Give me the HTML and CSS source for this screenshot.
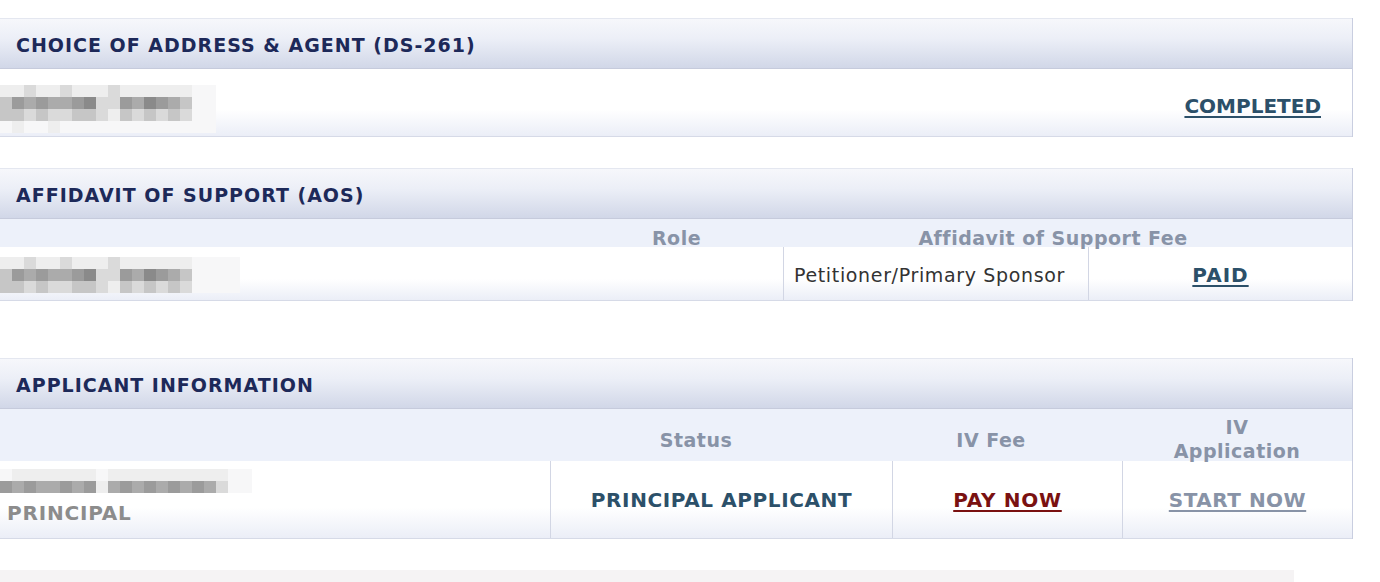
FILE: index.html
```html
<!DOCTYPE html>
<html>
<head>
<meta charset="utf-8">
<link rel="stylesheet" href="styles.css">
</head>
<body>
<div class="page">
  <section class="panel p1">
    <div class="panel-head">CHOICE OF ADDRESS &amp; AGENT (DS-261)</div>
    <div class="row row-single">
      <div class="blur blur1">
        <div class="bl r0"><i class="c1"></i><i class="c1"></i><i class="c2"></i><i class="c1"></i><i class="c1"></i><i class="c2"></i><i class="c1"></i><i class="c1"></i><i class="c1"></i><i class="c2"></i><i class="c1"></i><i class="c1"></i><i class="c1"></i><i class="c1"></i><i class="c1"></i><i class="c1"></i><i class="c0"></i><i class="c0"></i></div>
        <div class="bl r1"><i class="c3"></i><i class="c5"></i><i class="c4"></i><i class="c5"></i><i class="c4"></i><i class="c4"></i><i class="c5"></i><i class="c6"></i><i class="c2"></i><i class="c2"></i><i class="c5"></i><i class="c4"></i><i class="c6"></i><i class="c5"></i><i class="c4"></i><i class="c3"></i><i class="c0"></i><i class="c0"></i></div>
        <div class="bl r2"><i class="c3"></i><i class="c3"></i><i class="c2"></i><i class="c3"></i><i class="c2"></i><i class="c2"></i><i class="c3"></i><i class="c3"></i><i class="c2"></i><i class="c1"></i><i class="c3"></i><i class="c2"></i><i class="c3"></i><i class="c2"></i><i class="c3"></i><i class="c2"></i><i class="c0"></i><i class="c0"></i></div>
        <div class="bl r3"><i class="c0"></i><i class="c1"></i><i class="c0"></i><i class="c0"></i><i class="c1"></i><i class="c0"></i><i class="c0"></i><i class="c0"></i><i class="c0"></i><i class="c0"></i><i class="c0"></i><i class="c0"></i><i class="c0"></i><i class="c0"></i><i class="c0"></i><i class="c0"></i><i class="c0"></i><i class="c0"></i></div>
      </div>
      <a class="link status-link completed" href="#">COMPLETED</a>
    </div>
  </section>

  <section class="panel p2">
    <div class="panel-head">AFFIDAVIT OF SUPPORT (AOS)</div>
    <div class="subhead sub2">
      <div></div>
      <div class="sh">Role</div>
      <div class="sh">Affidavit of Support Fee</div>
      <div></div>
    </div>
    <div class="row grid2">
      <div class="cell name-cell">
        <div class="blur">
          <div class="bl r0"><i class="c1"></i><i class="c1"></i><i class="c2"></i><i class="c1"></i><i class="c1"></i><i class="c2"></i><i class="c1"></i><i class="c1"></i><i class="c1"></i><i class="c2"></i><i class="c1"></i><i class="c1"></i><i class="c1"></i><i class="c1"></i><i class="c1"></i><i class="c1"></i><i class="c0"></i><i class="c0"></i><i class="c0"></i><i class="c0"></i></div>
          <div class="bl r1"><i class="c3"></i><i class="c5"></i><i class="c4"></i><i class="c5"></i><i class="c4"></i><i class="c4"></i><i class="c5"></i><i class="c6"></i><i class="c2"></i><i class="c2"></i><i class="c5"></i><i class="c4"></i><i class="c6"></i><i class="c5"></i><i class="c4"></i><i class="c3"></i><i class="c0"></i><i class="c0"></i><i class="c0"></i><i class="c0"></i></div>
          <div class="bl r2"><i class="c3"></i><i class="c3"></i><i class="c2"></i><i class="c3"></i><i class="c2"></i><i class="c2"></i><i class="c3"></i><i class="c3"></i><i class="c2"></i><i class="c1"></i><i class="c3"></i><i class="c2"></i><i class="c3"></i><i class="c2"></i><i class="c3"></i><i class="c2"></i><i class="c0"></i><i class="c0"></i><i class="c0"></i><i class="c0"></i></div>
        </div>
      </div>
      <div class="cell role-cell">Petitioner/Primary Sponsor</div>
      <div class="cell center"><a class="link status-link paid" href="#">PAID</a></div>
    </div>
  </section>

  <section class="panel p3">
    <div class="panel-head">APPLICANT INFORMATION</div>
    <div class="subhead sub3">
      <div></div>
      <div class="sh">Status</div>
      <div class="sh fee">IV Fee</div>
      <div class="sh two">IV<br>Application</div>
    </div>
    <div class="row grid3">
      <div class="cell name-cell3">
        <div class="blur">
          <div class="bl r0"><i class="c0"></i><i class="c1"></i><i class="c1"></i><i class="c1"></i><i class="c1"></i><i class="c1"></i><i class="c1"></i><i class="c1"></i><i class="c0"></i><i class="c1"></i><i class="c1"></i><i class="c1"></i><i class="c1"></i><i class="c1"></i><i class="c1"></i><i class="c1"></i><i class="c1"></i><i class="c1"></i><i class="c1"></i><i class="c0"></i><i class="c0"></i></div>
          <div class="bl r1"><i class="c5"></i><i class="c4"></i><i class="c5"></i><i class="c4"></i><i class="c4"></i><i class="c5"></i><i class="c4"></i><i class="c5"></i><i class="c1"></i><i class="c4"></i><i class="c5"></i><i class="c4"></i><i class="c5"></i><i class="c4"></i><i class="c5"></i><i class="c4"></i><i class="c5"></i><i class="c4"></i><i class="c2"></i><i class="c0"></i><i class="c0"></i></div>
        </div>
        <div class="principal">PRINCIPAL</div>
      </div>
      <div class="cell center"><span class="status-text">PRINCIPAL APPLICANT</span></div>
      <div class="cell center"><a class="link pay" href="#">PAY NOW</a></div>
      <div class="cell center"><a class="link start" href="#">START NOW</a></div>
    </div>
  </section>

  <div class="footer-bar"></div>
</div>
</body>
</html>
```

FILE: styles.css
```css
html, body {
  margin: 0;
  padding: 0;
  background: #ffffff;
}

body {
  font-family: "DejaVu Sans", Verdana, sans-serif;
  overflow: hidden;
}

.page {
  width: 1380px;
  height: 582px;
  padding-top: 18px;
  box-sizing: border-box;
}

.panel {
  width: 1353px;
  box-sizing: border-box;
  border-right: 1px solid #c9cee0;
}

.p2 { margin-top: 31px; }
.p3 { margin-top: 57px; }

.panel-head {
  height: 51px;
  box-sizing: border-box;
  border-top: 1px solid #e4e7f0;
  border-bottom: 1px solid #c6cbdc;
  background: linear-gradient(#f6f7fb, #eceff7 40%, #d1d7e8);
  display: flex;
  align-items: center;
  padding-left: 16px;
  padding-top: 2px;
  font-weight: bold;
  font-size: 19px;
  color: #1d2959;
  letter-spacing: 1px;
}

.row {
  box-sizing: border-box;
  border-bottom: 1px solid #d6dae7;
  background: linear-gradient(#ffffff 60%, #ebeef7);
}

.row-single {
  height: 68px;
  display: flex;
  align-items: center;
  justify-content: space-between;
  padding-right: 31px;
  padding-top: 6px;
}

.blur1 { margin-top: 6px; }

.link {
  font-weight: bold;
  font-size: 20px;
  letter-spacing: 0.5px;
  text-decoration: underline;
  text-underline-offset: 3px;
}

.status-link { color: #2c5069; }
.completed { letter-spacing: 0; }
.paid { letter-spacing: 1px; }

/* blurred name pixels */
.blur {
  display: flex;
  flex-direction: column;
}
.bl {
  display: flex;
  height: 12px;
}
.bl i {
  display: block;
  width: 12px;
  height: 12px;
}
.bl .c0 { background: #f7f7f8; }
.bl .c1 { background: #eeeeee; }
.bl .c2 { background: #dadada; }
.bl .c3 { background: #c6c6c6; }
.bl .c4 { background: #ababab; }
.bl .c5 { background: #9b9b9b; }
.bl .c6 { background: #8a8a8a; }

.subhead {
  background: #edf1fa;
  display: grid;
  color: #8893a7;
  font-weight: bold;
  font-size: 19px;
  letter-spacing: 0.5px;
}

.sh { text-align: center; }

.sub2 {
  height: 28px;
  grid-template-columns: 570px 213px 540px 1fr;
  align-items: end;
}

.sub2 .sh { position: relative; top: 2px; }

.sub3 {
  height: 52px;
  grid-template-columns: 550px 292px 280px 230px;
  align-items: center;
}

.sub3 .sh { padding-top: 8px; }
.sub3 .fee { padding-left: 18px; }
.sub3 .two { line-height: 24px; padding-top: 6px; }

.grid2 {
  height: 54px;
  display: grid;
  grid-template-columns: 783px 305px 1fr;
}

.grid3 {
  height: 78px;
  display: grid;
  grid-template-columns: 550px 342px 230px 1fr;
}

.cell {
  display: flex;
  align-items: center;
  border-left: 1px solid #d2d6e4;
}
.cell:first-child { border-left: none; }

.grid2 .cell { padding-top: 3px; }

.center { justify-content: center; }

.role-cell {
  padding-left: 10px;
  font-size: 19px;
  letter-spacing: 0.65px;
  color: #333333;
}

.name-cell3 {
  flex-direction: column;
  align-items: flex-start;
  justify-content: flex-start;
  padding-top: 8px;
}

.principal {
  padding-left: 7px;
  padding-top: 8px;
  font-weight: bold;
  font-size: 20px;
  letter-spacing: 0.8px;
  color: #8c8c8c;
}

.status-text {
  font-weight: bold;
  font-size: 20px;
  letter-spacing: 0.6px;
  color: #2c5069;
}

.pay { color: #7a1111; letter-spacing: 0.7px; }
.start { color: #8893a7; }

.footer-bar {
  margin-top: 31px;
  width: 1294px;
  height: 20px;
  background: #f5f3f4;
}
```
